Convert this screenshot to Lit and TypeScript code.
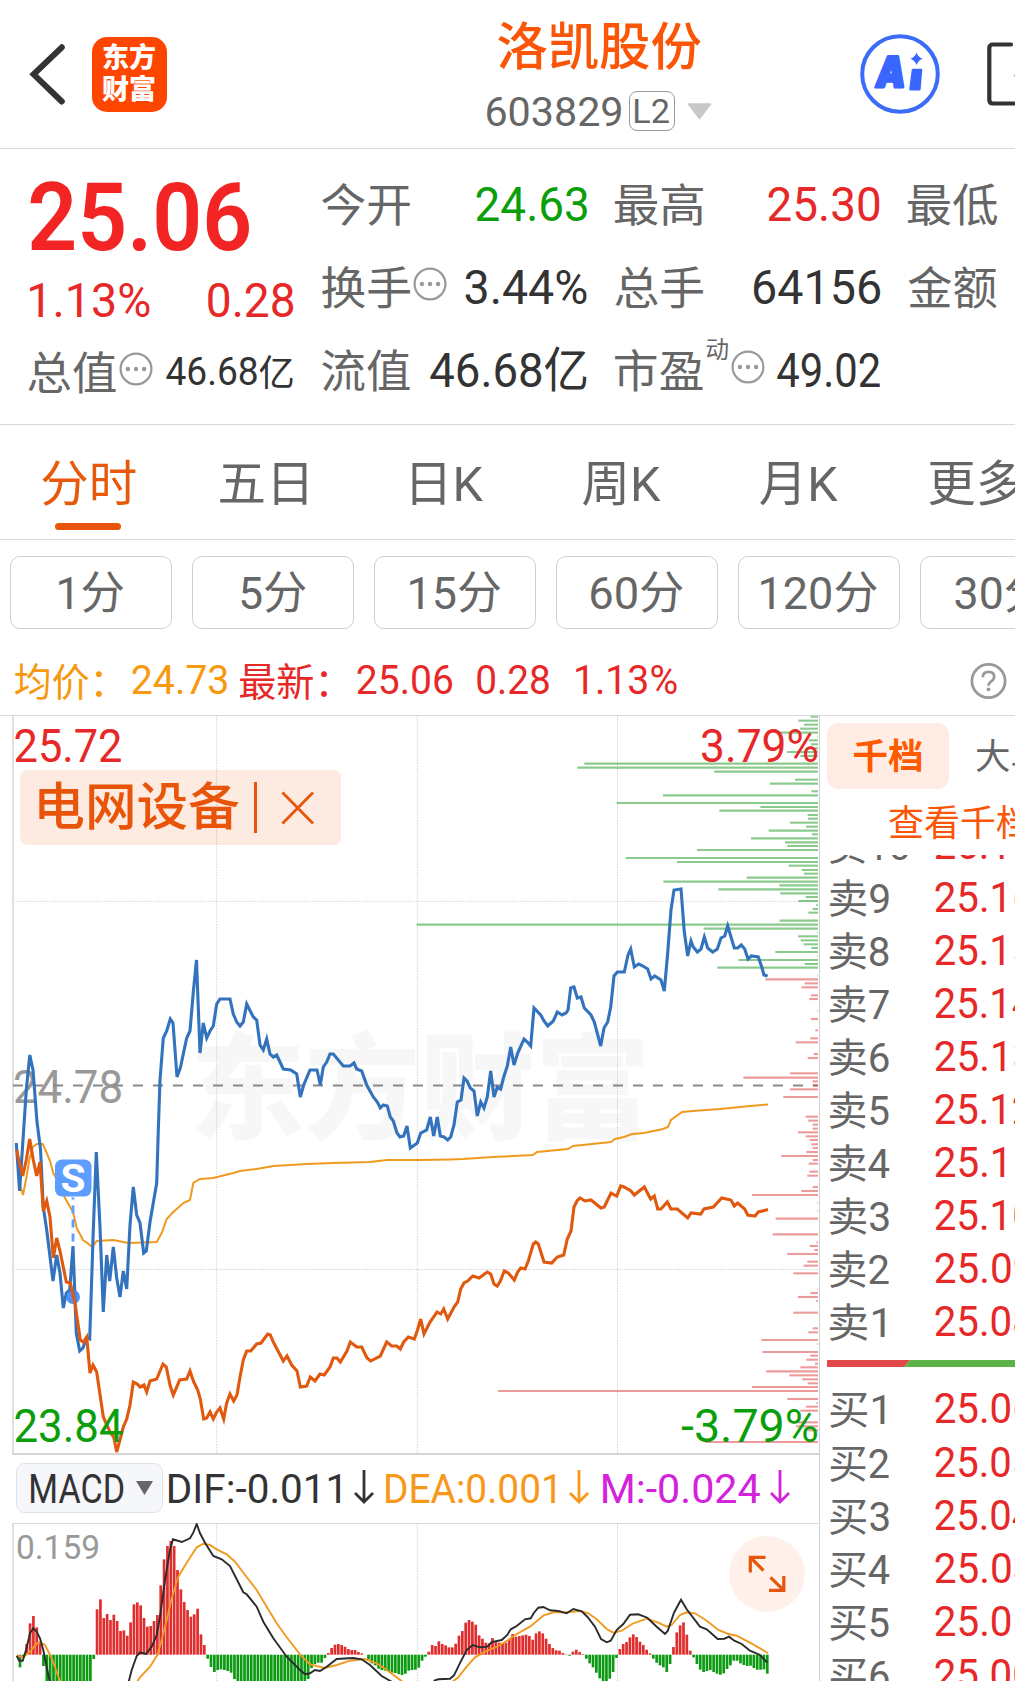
import { LitElement, html, svg, css } from "lit";
import { customElement, property } from "lit/decorators.js";

/** Squeezes its slotted text so that the inked part is exactly `w` pixels wide. */
@customElement("fit-text")
class FitText extends LitElement {
  @property({ type: Number }) w = 0;
  static styles = css`
    :host { display: inline-block; white-space: nowrap; flex: none; }
    .inner { display: inline-block; transform-origin: 0 50%; }
  `;
  render() {
    return html`<span class="inner"><slot></slot></span>`;
  }
  firstUpdated() {
    const inner = this.renderRoot.querySelector(".inner") as HTMLElement;
    const text = (this.textContent || "").trim();
    const cs = getComputedStyle(this);
    const ctx = document.createElement("canvas").getContext("2d")!;
    // Measured at ten times the size, so that the rounding of the ink box is negligible.
    ctx.font = `${cs.fontWeight} ${parseFloat(cs.fontSize) * 10}px ${cs.fontFamily}`;
    const m = ctx.measureText(text);
    const scale = (this.w * 10) / (m.actualBoundingBoxLeft + m.actualBoundingBoxRight);
    const shift = (m.actualBoundingBoxLeft / 10) * scale;
    // Optical centring: capitals and ideographs sit above the middle of the line box.
    const drop = text.charCodeAt(0) > 0x2fff ? "0.065em" : "0.03em";
    inner.style.transform = `translate(${shift}px, ${drop}) scaleX(${scale})`;
    this.style.width = `${this.w}px`;
  }
}

type Pt = [number, number];

/** Data sampled on a grid of thirds of a pixel, relative to an origin. */
const thirds = (ox: number, oy: number, flat: number[]): Pt[] => {
  const out: Pt[] = [];
  for (let i = 0; i < flat.length; i += 2) out.push([ox + flat[i] / 3, oy + flat[i + 1] / 3]);
  return out;
};
const pts = (list: Pt[]) => list.map(([x, y]) => `${x.toFixed(1)},${y.toFixed(1)}`).join(" ");

const PRICE = "16.3,1143 19.6,1191 23,1140 26.3,1090 29.8,1055 33,1070 37,1122 40.5,1149 43.3,1207 46.7,1230 53,1281 56.7,1255 60,1273 63.3,1308 66.3,1293 69.7,1290 73,1246 76.3,1333 79.7,1351 83,1348 86.3,1338 89.7,1339 93.3,1230 96.3,1152 100,1227 103.3,1312 106.7,1255 109.7,1281 113.3,1247 116.7,1278 120,1297 123.3,1271 126.7,1289 130,1225 133.3,1187 136.7,1215 140,1223 143.7,1253 146.3,1251 150,1222 156.7,1183 158.3,1130 160,1080 163.3,1038 166.7,1031 170.3,1019 173,1023 177,1077 180.3,1068 186.7,1038 190,1031 193.3,992 196.5,960 200,1053 203.3,1023 206.7,1038 210,1031 213.3,1026 216.7,1004 220,999 230,999 233.3,1014 236.7,1022 240,1026 243.3,1022 246.7,1004 253.3,1017 256.7,1020 260,1045 263.3,1050 266.7,1039 270,1054 273.3,1057 276.7,1055 283.3,1069 290.7,1070 296.7,1074 300.3,1097 303.7,1085 310,1070 317,1070 320.3,1085 323.3,1067 326.7,1062 330,1054 333.3,1054 343.3,1066 350,1066 354,1063 356.7,1069 361.7,1071 366.7,1085 373.3,1097 377.3,1102 380.3,1108 383.3,1105 387.3,1106 390.3,1117 393.3,1121 397,1133 400,1137 403.7,1136 407,1126 410.3,1148 417.3,1143 420.7,1133 426.7,1130 430.3,1117 433.7,1136 437.3,1117 440.3,1136 444,1137 447.7,1140 450.7,1137 454,1125 457.3,1102 461,1100 464,1078 467,1081 470.3,1088 474,1091 477.3,1116 480.7,1102 484,1108 487.3,1097 490.7,1071 494,1097 497.3,1087 500.7,1089 503.7,1077 507.3,1066 510.7,1047 514,1065 517.7,1053 524,1039 527.3,1042 530.7,1046 534,1008 540.7,1015 544,1021 547.7,1026 553.3,1021 557.3,1012 562,1015 566,1013 568,1010 570.7,988 574,987 577.3,998 581,997 584.3,1008 591,1015 594.3,1022 600.7,1046 604,1028 607.7,1022 610.7,1007 614,976 617.3,972 624.3,972 628,955 630.7,949 634.3,967 638.7,964 643,966 647.7,969 651,979 654.7,976 661,980 664.3,991 667.7,953 671,910 674,890 681,889 684.3,932 687.7,956 691,941 693.3,947 697.3,952 701,949 704.3,937 707.7,948 712.7,952 717.3,949 721,938 724.7,936 727.7,926 734.3,948 737.7,948 741.3,945 744.7,949 748,959 751.3,956 758.3,957 761.7,967 764,975 767.6,976";
const SECTOR = "16.7,1150 19.5,1163 22.7,1176 26.3,1160 29.7,1139 33.3,1160 36.7,1176 40,1162 43.3,1211 46.7,1201 50,1217 53.3,1258 56.7,1238 60,1251 66.3,1282 70.3,1283 75,1303 80.3,1340 83.3,1342 86.7,1337 90,1373 93,1365 96.7,1372 103.3,1417 110,1432 113.7,1437 116.7,1452 123.3,1427 126.7,1419 130,1405 133.3,1382 137.3,1384 140,1387 144,1385 146.7,1392 150,1381 156.7,1379 163,1364 166.3,1367 170,1385 173.3,1395 179.7,1380 186.7,1379 190,1371 193.3,1381 197.7,1390 200.3,1399 203.7,1419 206.7,1418 210,1412 213.3,1419 216.7,1412 220,1408 223.7,1419 226.7,1403 230,1394 233.7,1401 237,1395 240,1377 243.3,1360 246.7,1351 250.7,1351 256.7,1344 261,1343 267.7,1334 270.3,1335 273.3,1342 283.3,1361 287,1356 291.7,1365 297,1371 300.3,1387 306.7,1386 310.3,1377 315,1381 320,1374 324.3,1375 330,1367 333.3,1358 337,1358 340.3,1362 347,1351 350.3,1342 356.7,1347 361.7,1347 367,1358 370.7,1361 380.3,1356 386.7,1342 391.7,1346 396.7,1346 400.3,1349 403.7,1342 408.3,1337 414.3,1339 417.5,1330 420.7,1319 424,1334 430,1322 437,1312 440.7,1314 443.7,1309 447.7,1319 454,1307 457.7,1302 460.7,1289 464,1283 467.7,1281 472.7,1276 479,1278 487.3,1272 490.7,1274 494,1284 497.3,1286 500.3,1281 504.3,1271 508.3,1273 514.3,1280 517.7,1272 520.7,1268 525,1269 528.3,1261 533.3,1244 535.7,1242 538.3,1244 544,1262 551.7,1263 557.3,1257 563.7,1255 567.3,1239 571,1231 574,1207 577,1201 580,1198 585,1201 591,1200 601,1208 604.3,1207 611,1193 616.7,1196 620.7,1186 624,1187 631,1191 634.3,1195 644.3,1187 650.7,1199 654.3,1196 657.7,1209 661,1209 667.3,1202 671,1209 677.3,1209 687.7,1218 691,1213 700.7,1214 704,1209 713.3,1207 721.7,1198 731,1200 734.3,1206 737.7,1203 744.7,1209 747.7,1215 755,1216 758.3,1212 768,1209.5";
const AVERAGE = "17,1153 20,1185 23,1195 26.3,1178 29.3,1160 32.7,1147 36.7,1144 42.7,1144 46.7,1153 50,1161 53.3,1173 60,1185 65,1198 73,1212 76.7,1228 83,1240 87.3,1243 92.3,1247 96.7,1241 113.3,1240 128.3,1243 156.7,1242 161.7,1233 166.7,1219 173.3,1212 183.3,1203 190,1200 193.3,1183 200,1179 213.3,1178 233.3,1173 240,1171 256.7,1169 273.3,1166 306.7,1164 333,1163 370,1162 387,1160 420,1160 450,1159.5 463,1159 493,1157 533,1155 537,1152 568,1149 573,1146 611,1142 615,1139 624,1137 632,1134 644,1133 663,1129 668,1127 671,1120 682,1112 693,1111 720,1109 740,1107 768,1104.5";

/* Order depth by price level: start x and level y, every bar ends at the right edge. */
const ASKS: Pt[] = [
  ...thirds(507, 430, [911,860,874,872,891,884,879,896,810,908,931,920,905,931,912,943,915,955,840,966,880,978,232,1001,211,1013,622,1025,864,1049,789,1061,913,1084,468,1096,329,1119,760,1131,637,1142,902,1155,903,1166,849,1178,897,1190,785,1202,915,1213,732,1225,834,1237,841,1248,570,1260,356,1284]),
  ...thirds(400, 850, [831,36,1166,47,1205,60,1212,71,1040,83,790,95,1138,106,955,118,1141,130,1217,141,1195,153,1249,165,1238,177,1225,188,1139,212,50,224,911,236,1252,248,1194,259,1202,271,1211,283,1234,294,1126,306,1252,318,1015,330,1214,342,952,353,1252,377]),
];
const BIDS: Pt[] = [
  ...thirds(400, 850, [1096,388,1214,400,1204,412,1233,436,1228,447,1252,483,1233,507,1246,541,1231,565,1187,577,1241,612,1223,624,1170,670,1030,683,1238,694,1238,706,1170,718,1150,741,1217,800,1225,812,1238,824,1238,836,1194,847,1217,859,1229,870,1234,883,1238,894,1219,906,1144,918,1238,930,1226,941,1228,965,1222,977]),
  ...thirds(400, 1130, [1238,171,1204,183,1056,195,1252,218,1252,243,1127,266,1118,313,1250,337,1229,348,1243,360,1162,372,1222,395,1211,407,1180,430,1252,478,1231,489,1194,501,1249,513,1180,548,1238,595,1225,607,1084,630,1252,642,1087,666,1231,677,1219,689,1245,701,1201,712,1099,724,1168,736,1207,748,1223,760,1056,771,294,783,1162,807,1250,819,1218,830,1201,842,1190,877,1188,889,1225,901,915,936]),
];

const HIST = [0,-38,-8,32,94,116,82,40,-34,-90,-90,-90,-90,-90,-90,-90,-90,-90,-90,-90,-90,-90,-90,-13,136,166,110,122,104,120,101,71,73,57,97,151,157,148,110,84,86,101,119,208,286,326,341,326,254,196,158,134,114,121,138,61,29,-12,-37,-52,-46,-44,-46,-49,-54,-73,-90,-90,-90,-90,-90,-90,-90,-90,-90,-90,-90,-90,-90,-90,-90,-90,-90,-90,-90,-90,-90,-73,-40,-28,-24,-24,-10,5,20,30,32,29,24,17,14,14,8,4,0,-14,-26,-32,-42,-46,-48,-50,-54,-55,-58,-61,-57,-48,-46,-45,-39,-18,-6,9,29,26,40,32,28,22,22,33,57,71,96,104,99,90,58,48,36,34,50,38,36,34,36,48,62,54,56,58,60,56,45,64,70,64,48,32,20,13,12,5,1,-3,9,15,8,2,-12,-26,-38,-54,-71,-85,-85,-72,-52,-10,17,32,38,52,61,53,39,29,15,4,-12,-24,-32,-38,-52,-28,23,67,88,97,60,12,-8,-28,-45,-52,-49,-46,-52,-57,-60,-56,-43,-32,-18,-18,-26,-31,-34,-33,-40,-45,-45,-44,-57];

const DIF = [
  ...thirds(0, 1440, [50,647,58,662,68,662,78,630,90,580,100,565,110,575,120,595,130,630,140,680,150,730,170,840,340,840,385,730,395,690,410,648,420,637,438,642,455,620,470,585,480,530,495,420,510,330,519,298,545,306,570,295,580,278,590,252,600,280,615,308,640,348,665,358,690,378,710,418,730,457,740,463,770,500,790,545,820,595,860,650,900,690,915,703,930,700,945,690,960,693,980,680,1010,657,1060,654,1085,658,1110,675,1145,708,1175,725,1200,745]),
  ...thirds(400, 1440, [80,745,105,721,115,718,150,716,162,706,182,665,200,630,218,615,240,622,262,620,275,606,305,600,322,585,332,568,350,558,375,538,392,535,402,518,415,503,430,501,450,511,475,513,500,520,520,507,545,514,562,530,585,560,603,597,620,607,632,602,650,570,670,552,690,524,715,523,742,533,770,560,795,582,803,573,822,518,843,479,860,508,900,560,920,568,953,597,973,596,987,590,1003,602,1025,612,1050,632,1080,645,1102,668]),
];
const DEA = [
  ...thirds(0, 1440, [50,647,70,651,90,635,110,610,120,607,135,615,155,655,170,695,182,730,220,840,350,840,405,735,420,712,450,680,472,645,485,600,500,540,515,475,535,410,560,368,590,322,610,311,630,315,650,328,680,343,705,365,730,398,770,450,800,500,830,550,860,592,900,643,930,673,975,684,1010,675,1050,662,1095,657,1130,670,1170,697,1210,727,1230,745]),
  ...thirds(400, 1440, [120,745,155,727,175,712,200,680,225,652,250,638,290,620,325,600,345,585,390,560,430,527,460,517,500,517,540,513,565,520,590,538,620,567,640,578,665,572,700,550,740,536,775,548,800,560,815,555,840,525,860,517,885,520,920,542,955,570,985,582,1010,587,1050,608,1085,628,1104,640]),
];

const SELLS: [string, string, number, number][] = [
  ["卖10", "25.17", 79, 98], ["卖9", "25.16", 58.7, 98], ["卖8", "25.15", 58.7, 98], ["卖7", "25.14", 59, 98.5],
  ["卖6", "25.13", 58.7, 98], ["卖5", "25.12", 58.7, 98], ["卖4", "25.11", 59.5, 92], ["卖3", "25.10", 58.7, 98],
  ["卖2", "25.09", 58.7, 98], ["卖1", "25.08", 54.5, 98],
];
const BUYS: [string, string, number, number][] = [
  ["买1", "25.06", 54.5, 98], ["买2", "25.05", 58.7, 98], ["买3", "25.04", 58.7, 98.5],
  ["买4", "25.03", 59.5, 98], ["买5", "25.01", 58.7, 92], ["买6", "25.00", 58.7, 98],
];

const more = html`<svg class="more" viewBox="0 0 34 34"><circle cx="17" cy="17" r="15.4" fill="none" stroke="#999" stroke-width="2.2"/><circle cx="8.9" cy="17" r="2.2" fill="#999"/><circle cx="17" cy="17" r="2.2" fill="#999"/><circle cx="25.1" cy="17" r="2.2" fill="#999"/></svg>`;
const down = html`<svg class="down" viewBox="0 0 20 34"><path d="M10 0V32M1 23L10 32L19 23" fill="none" stroke="currentColor" stroke-width="2.8"/></svg>`;

@customElement("app-root")
class AppRoot extends LitElement {
  static styles = css`
    :host {
      display: flex; flex-direction: column; width: 1015px; height: 1681px; overflow: hidden;
      background: #fff; color: #333; box-sizing: border-box;
      font-family: Roboto, "Noto Sans CJK SC", sans-serif;
    }
    * { box-sizing: border-box; }
    svg { display: block; flex: none; }
    .red { color: #e62829; }
    .green { color: #0b9e0b; }

    .top { height: 149px; flex: none; display: flex; border-bottom: 1px solid #d8d8d8; }
    .nav { width: 487px; display: flex; padding: 37px 0 0 26px; gap: 25px; }
    .logo { width: 75px; height: 75px; border-radius: 15px; background: #ff4600; color: #fff; font-size: 27px;
      font-weight: 800; line-height: 32px; padding: 5px 0 0 10px; }
    .title { width: 226px; padding-top: 15px; }
    .name { font-size: 51.5px; line-height: 60px; height: 60px; color: #fb5607; padding-left: 11px; font-weight: 500; }
    .code { display: flex; align-items: center; height: 40px; margin-top: 16px; color: #666; font-size: 41px; line-height: 40px; gap: 8px; }
    .l2 { width: 46px; height: 40px; border: 1.4px solid #999; border-radius: 8px; font-size: 34px; line-height: 36px; padding-left: 5px; }
    .caret { margin-left: 4px; }
    .tools { flex: 1; display: flex; padding: 32px 0 0 145px; gap: 43px; }

    .quote { height: 276px; flex: none; border-bottom: 1px solid #d8d8d8; display: flex; gap: 28px; padding: 13px 0 0 28px; color: #666; }
    .col { width: 265px; flex: none; }
    .col + .col { position: relative; left: 0.5px; }
    .cell { height: 83.2px; display: flex; align-items: center; justify-content: space-between; font-size: 45.5px; line-height: 60px; }
    .val { color: #333; font-size: 48px; }
    .val.red { color: #e62829; }
    .val.green { color: #0b9e0b; }
    .tight { display: flex; align-items: center; }
    .more { width: 34px; height: 34px; margin: 0 0 5px 3px; }
    .big { height: 110px; padding-left: 2px; font-size: 95px; line-height: 106px; font-weight: 600; color: #f32424; }
    .chg { height: 58px; line-height: 56px; font-size: 48px; padding-left: 2px; display: flex; justify-content: space-between; }
    .small { font-size: 38px; }
    .small .yi { font-size: 36px; margin-left: 2px; }
    .sup { font-size: 23.5px; line-height: 24px; margin: 0 0 40px 3px; }
    .sup + .more { margin-left: 2px; }

    .tabs { height: 115px; flex: none; border-bottom: 1px solid #d8d8d8; display: flex; color: #666; font-size: 48.5px; line-height: 120px; }
    .tab { width: 177.4px; flex: none; text-align: center; white-space: nowrap; position: relative; }
    .tab.on { color: #e8590c; }
    .tab.on::after { content: ""; position: absolute; left: 55px; top: 98px; width: 66px; height: 7px; border-radius: 4px; background: #e8550a; }

    .pills { height: 105px; flex: none; display: flex; gap: 20px; padding: 16px 0 0 10px; color: #666; }
    .pill { width: 162px; height: 73px; flex: none; border: 1.6px solid #cfcfcf; border-radius: 10px; display: flex; justify-content: center; font-size: 45px; line-height: 71px; }

    .info { height: 71px; flex: none; border-bottom: 1px solid #d8d8d8; display: flex; align-items: center; padding: 0 8px 0 15px; font-size: 40px; line-height: 60px; }
    .cjk { font-size: 39px; }
    .avg { color: #f7980f; }
    .info .gap0 { margin-left: 13px; }
    .info .gap1 { margin-left: 30px; }
    .info .gap2 { margin-left: 25px; }
    .info .gap3 { margin-left: 27px; }
    .help { margin-left: auto; }

    .body { flex: 1; display: flex; min-height: 0; }
    .charts { width: 820px; flex: none; border-right: 1px solid #ccd0d3; position: relative; }
    .main { height: 739px; }
    .tag { position: absolute; left: 20px; top: 54px; width: 321px; height: 75px; border-radius: 7px; background: rgba(240, 90, 20, .12);
      color: #e8550a; font-size: 51px; line-height: 70px; font-weight: 500; display: flex; padding-left: 19px; }
    .tag svg { margin: 12px 0 0 14px; }
    .macd { height: 68px; display: flex; align-items: center; padding: 0 0 3px 16px; font-size: 41.5px; line-height: 49px; }
    .pick { width: 147px; height: 50px; border-radius: 9px; border: 1px solid #dfe2e8; background: #f6f7fa; display: flex; align-items: center; padding-left: 14px; gap: 12px; margin-right: 6px; }
    .down { width: 20px; height: 34px; margin: 0 12px 2px 14px; }
    .m .down { margin-left: 10px; }
    .dea { color: #f7981b; }
    .dea .down { margin-right: 14px; }
    .m { color: #d321dc; }
    .sub { height: 158px; }
    .charts text { font-family: Roboto, "Noto Sans CJK SC", sans-serif; }
    .zoom { position: absolute; left: 729px; top: 820px; }

    .book { flex: 1; min-width: 0; overflow: hidden; }
    .modes { height: 73px; padding: 7px 0 0 7px; display: flex; font-size: 35.5px; line-height: 68px; color: #666; white-space: nowrap; gap: 26px; }
    .mode { width: 122px; height: 66px; flex: none; border-radius: 11px; background: #feece5; color: #ff5a00; font-weight: 700; text-align: center; }
    .all { height: 66px; padding-left: 68px; font-size: 36px; line-height: 70px; color: #fb5607; white-space: nowrap; }
    .levels { height: 826px; overflow: hidden; }
    .sells { margin-top: -38px; }
    .level { height: 53.06px; display: flex; align-items: center; padding-left: 10px; font-size: 40px; color: #666; line-height: 53px; }
    .lv { width: 104.5px; flex: none; }
    .price { font-size: 43px; color: #e62829; }
    .split { margin: 13px 0 14px 7px; }
  `;

  label(x: number, y: number, w: number, size: number, fill: string, t: string) {
    return svg`<text x=${x} y=${y} font-size=${size} fill=${fill} textLength=${w} lengthAdjust="spacingAndGlyphs">${t}</text>`;
  }

  level(l: [string, string, number, number]) {
    return html`<div class="level"><div class="lv"><fit-text w=${l[2]}>${l[0]}</fit-text></div><fit-text class="price" w=${l[3]}>${l[1]}</fit-text></div>`;
  }

  grid(y1: number, y2: number) {
    return [216.7, 417.3, 617.5].map((x) => svg`<path d="M${x} ${y1}V${y2}" stroke="#cfcfcf" stroke-width="1" stroke-dasharray="1.3 1.3"/>`);
  }

  mainChart() {
    return html`<svg class="main" width="819" height="739" viewBox="0 716 819 739">
      <text x="190" y="1130" font-size="115" font-weight="900" fill="#f7f7f7" textLength="460" lengthAdjust="spacingAndGlyphs">东方财富</text>
      ${this.grid(716, 1453)}
      ${[901.3, 1269.5].map((y) => svg`<path d="M13 ${y}H818" stroke="#cfcfcf" stroke-width="1" stroke-dasharray="1.3 1.3"/>`)}
      <path d="M13 716V1454" stroke="#e0e0e0" stroke-width="2"/>
      <path d="M12 1454H819" stroke="#d6d6d6" stroke-width="2"/>
      ${this.label(13, 1102.5, 110, 45.5, "#999", "24.78")}
      <path d="M13 1085.5H818" stroke="#888" stroke-width="2.2" stroke-dasharray="10 10"/>
      ${ASKS.map(([x, y]) => svg`<path d="M${x} ${y}H818" stroke="#1f9a24" stroke-opacity=".52" stroke-width="2.1"/>`)}
      ${BIDS.map(([x, y]) => svg`<path d="M${x} ${y}H818" stroke="#dc4545" stroke-opacity=".54" stroke-width="2.1"/>`)}
      <polyline points=${AVERAGE} fill="none" stroke="#ef9a1f" stroke-width="2"/>
      <path d="M73 1197.5V1246" stroke="#5c9dff" stroke-width="2.8" stroke-dasharray="8 6" stroke-dashoffset="6"/>
      <rect x="55" y="1159.5" width="36.5" height="37" rx="7" fill="#5c9dff"/>
      <text x="60.5" y="1192" font-size="38.5" font-weight="700" fill="#fff" textLength="25" lengthAdjust="spacingAndGlyphs">S</text>
      <polyline points=${PRICE} fill="none" stroke="#3373bd" stroke-width="3.1"/>
      <circle cx="73" cy="1297" r="7" fill="#3d87f5" fill-opacity=".9"/>
      <polyline points=${SECTOR} fill="none" stroke="#e0590f" stroke-width="3.1"/>
      ${this.label(13.5, 762, 109, 45.5, "#e62829", "25.72")}
      ${this.label(700, 762, 119, 45.5, "#e62829", "3.79%")}
      ${this.label(13.5, 1442, 110, 45.5, "#0b9e0b", "23.84")}
      ${this.label(681, 1442, 138, 45.5, "#0b9e0b", "-3.79%")}
    </svg>`;
  }

  macdChart() {
    return html`<svg class="sub" width="819" height="158" viewBox="0 1523 819 158">
      <path d="M12 1523.5H818" stroke="#d8d8d8" stroke-width="1"/>
      <path d="M13 1523V1681" stroke="#e0e0e0" stroke-width="2"/>
      ${this.grid(1524, 1681)}
      ${this.label(16, 1559, 84, 34, "#999", "0.159")}
      ${HIST.map((v, i) => {
        const h = Math.abs(v) / 3;
        return svg`<rect x=${15.3 + i * 3.351} y=${v > 0 ? 1654.7 - h : 1654.7} width="2.7" height=${h} fill=${v > 0 ? "#e02d2d" : "#0c9a12"}/>`;
      })}
      <polyline points=${pts(DEA)} fill="none" stroke="#f09a20" stroke-width="1.9"/>
      <polyline points=${pts(DIF)} fill="none" stroke="#2b2b2b" stroke-width="1.9"/>
    </svg>`;
  }

  render() {
    return html`
      <div class="top">
        <div class="nav">
          <svg width="41" height="75" viewBox="26 37 41 75"><path d="M61.8 47.3L33.6 74.3L61.8 101.5" fill="none" stroke="#333" stroke-width="6" stroke-linecap="round"/></svg>
          <div class="logo"><div>东方</div><div>财富</div></div>
        </div>
        <div class="title">
          <div class="name"><fit-text w="203">洛凯股份</fit-text></div>
          <div class="code"><fit-text w="134">603829</fit-text><div class="l2"><fit-text w="34">L2</fit-text></div>
            <svg class="caret" width="25" height="17" viewBox="0 0 25 17"><path d="M1.5 1H23.5L12.5 15.5Z" fill="#c8c8c8" stroke="#c8c8c8" stroke-width="1.6" stroke-linejoin="round"/></svg>
          </div>
        </div>
        <div class="tools">
          <svg width="84" height="84" viewBox="0 0 84 84"><circle cx="42" cy="42" r="37.8" fill="none" stroke="#3b6cf8" stroke-width="4"/>
            <text x="17" y="55.3" transform="translate(6.5 0) skewX(-7)" font-family="Inter, sans-serif" font-size="42" font-weight="900" fill="#3866ff" stroke="#3866ff" stroke-width="3" stroke-linejoin="round" textLength="29" lengthAdjust="spacingAndGlyphs">A</text>
            <path d="M55 38H63L61.3 57.3H52.5Z" fill="#3866ff" stroke="#3866ff" stroke-width="2.6" stroke-linejoin="round"/>
            <path d="M58.6 20.5Q60 25 64.6 26.8Q60 28.6 58.6 33Q57 28.6 52.4 26.8Q57 25 58.6 20.5Z" fill="#3866ff"/></svg>
          <svg width="30" height="84" viewBox="985 32 30 84"><path d="M1011 44.5H993Q989.3 44.5 989.3 48V100Q989.3 103.5 993 103.5H1016" fill="none" stroke="#333" stroke-width="4.2" stroke-linecap="round"/><path d="M1013.8 75.5H1015" stroke="#bbb" stroke-width="2"/></svg>
        </div>
      </div>

      <div class="quote">
        <div class="col">
          <div class="big"><fit-text w="220">25.06</fit-text></div>
          <div class="chg red"><fit-text w="120">1.13%</fit-text><fit-text w="85.5">0.28</fit-text></div>
          <div class="cell"><div class="tight"><fit-text w="88">总值</fit-text>${more}</div><div class="val small"><fit-text w="91">46.68</fit-text><fit-text class="yi" w="34">亿</fit-text></div></div>
        </div>
        <div class="col">
          <div class="cell"><fit-text w="88">今开</fit-text><fit-text class="val green" w="111">24.63</fit-text></div>
          <div class="cell"><div class="tight"><fit-text w="88">换手</fit-text>${more}</div><fit-text class="val" w="122">3.44%</fit-text></div>
          <div class="cell"><fit-text w="88">流值</fit-text><fit-text class="val" w="157">46.68亿</fit-text></div>
        </div>
        <div class="col">
          <div class="cell"><fit-text w="88">最高</fit-text><fit-text class="val red" w="111.5">25.30</fit-text></div>
          <div class="cell"><fit-text w="88">总手</fit-text><fit-text class="val" w="126">64156</fit-text></div>
          <div class="cell"><div class="tight"><fit-text w="88">市盈</fit-text><span class="sup">动</span>${more}</div><fit-text class="val" w="103">49.02</fit-text></div>
        </div>
        <div class="col">
          <div class="cell"><fit-text w="89">最低</fit-text></div>
          <div class="cell"><fit-text w="89">金额</fit-text></div>
        </div>
      </div>

      <div class="tabs">
        ${["分时", "五日", "日K", "周K", "月K", "更多"].map((t, i) => html`<div class="tab ${i === 0 ? "on" : ""}">${t}</div>`)}
      </div>

      <div class="pills">
        ${([["1分", 64.5], ["5分", 65], ["15分", 90.5], ["60分", 92], ["120分", 116], ["30分", 92]] as [string, number][]).map(
          ([t, w]) => html`<div class="pill"><fit-text w=${w}>${t}</fit-text></div>`)}
      </div>

      <div class="info">
        <fit-text class="avg cjk" w="87">均价：</fit-text><fit-text class="avg gap1" w="95">24.73</fit-text>
        <fit-text class="red cjk gap0" w="87">最新：</fit-text><fit-text class="red gap1" w="95">25.06</fit-text>
        <fit-text class="red gap2" w="72">0.28</fit-text><fit-text class="red gap3" w="101">1.13%</fit-text>
        <svg class="help" width="37" height="37" viewBox="0 0 37 37"><circle cx="18.5" cy="19" r="16.6" fill="none" stroke="#999" stroke-width="2.8"/><path d="M12.8 15.2Q12.8 9.8 18.5 9.8Q24.2 9.8 24.2 14.6Q24.2 17.4 21.2 19.4Q18.5 21.2 18.5 23.8" fill="none" stroke="#999" stroke-width="2.7"/><circle cx="18.5" cy="27.3" r="1.9" fill="#999"/></svg>
      </div>

      <div class="body">
        <div class="charts">
          ${this.mainChart()}
          <div class="tag"><fit-text w="200">电网设备</fit-text>
            <svg width="64" height="51" viewBox="253 782 64 51"><path d="M255.5 782V833" stroke="#e8550a" stroke-width="3"/><path d="M282.5 792.5L313 823.5M313 792.5L282.5 823.5" stroke="#e8550a" stroke-width="2.8"/></svg>
          </div>
          <div class="macd">
            <div class="pick"><fit-text w="92.5">MACD</fit-text><svg width="17" height="14" viewBox="0 0 17 14"><path d="M0 0H17L8.5 14Z" fill="#666"/></svg></div>
            <fit-text w="171">DIF:-0.011</fit-text>${down}
            <fit-text class="dea" w="169">DEA:0.001</fit-text><span class="dea">${down}</span>
            <fit-text class="m" w="157">M:-0.024</fit-text><span class="m">${down}</span>
          </div>
          ${this.macdChart()}
          <svg class="zoom" width="76" height="76" viewBox="729 1536 76 76"><circle cx="767" cy="1574" r="38" fill="#fff1ea"/><path d="M765.5 1557.3H750.3V1572.5M751 1558L763.5 1570.5M769 1590.3H783.8V1576M783 1589.6L770.5 1577.3" fill="none" stroke="#e4570d" stroke-width="3.2"/></svg>
        </div>
        <div class="book">
          <div class="modes"><div class="mode">千档</div><div>大单</div></div>
          <div class="all">查看千档</div>
          <div class="levels">
            <div class="sells">${SELLS.map((l) => this.level(l))}</div>
            <svg class="split" width="188" height="7" viewBox="0 0 188 7"><path d="M0 0H83L77 7H0Z" fill="#e0484a"/><path d="M83 0H188V7H77Z" fill="#5bb347"/></svg>
            ${BUYS.map((l) => this.level(l))}
          </div>
        </div>
      </div>
    `;
  }
}
